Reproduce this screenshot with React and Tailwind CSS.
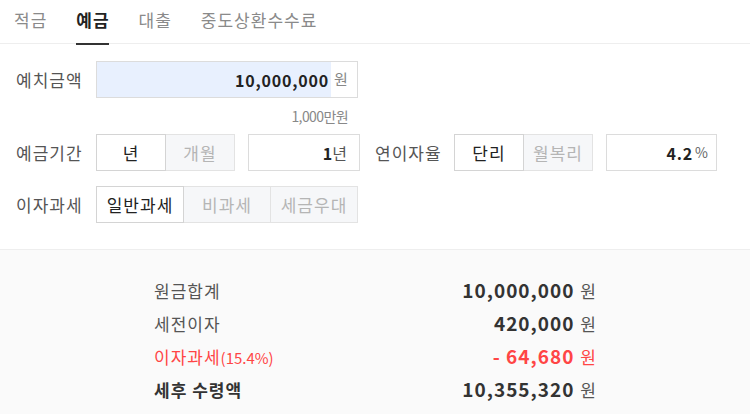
import React, { useState } from "react";

const tabs = ["적금", "예금", "대출", "중도상환수수료"];

const results = [
  { label: "원금합계", value: "10,000,000" },
  { label: "세전이자", value: "420,000" },
  { label: "이자과세", sub: "(15.4%)", value: "- 64,680", red: true },
  { label: "세후 수령액", value: "10,355,320", bold: true },
];

function classNames(...classes) {
  return classes.filter(Boolean).join(" ");
}

function Toggle({ items, active, width }) {
  return (
    <div className="flex">
      {items.map((item, i) => (
        <button
          key={item}
          type="button"
          className={classNames(
            "h-[37px] border text-[17px] tracking-[1px]",
            width,
            i > 0 && "-ml-px",
            i === active
              ? "relative z-10 border-[#d4d4d4] bg-white text-[#222]"
              : "border-[#e3e3e3] bg-[#f6f7f9] text-[#b5b5b5]"
          )}
        >
          {item}
        </button>
      ))}
    </div>
  );
}

export default function App() {
  const [tab, setTab] = useState(1);

  return (
    <div className="h-[414px] w-[750px] overflow-hidden bg-white font-['Noto_Sans_CJK_KR','Noto_Sans',sans-serif] text-[#555]">
      {/* tabs */}
      <div className="flex h-[44px] gap-[29px] border-b border-[#eeeeee] pl-[14px]">
        {tabs.map((t, i) => (
          <button
            key={t}
            type="button"
            onClick={() => setTab(i)}
            className={classNames(
              "relative h-[44px] pb-[4px] text-[17px] tracking-[1px]",
              i === tab ? "font-bold text-[#222]" : "text-[#8a8a8a]"
            )}
          >
            {t}
            {i === tab && (
              <span className="absolute bottom-[-1px] left-0 h-[2px] w-[33px] bg-[#333]" />
            )}
          </button>
        ))}
      </div>

      {/* form */}
      <div className="h-[206px] border-b border-[#eeeeee] pl-[16px] pt-[17px]">
        <div className="flex items-center">
          <div className="w-[80px] text-[17px] tracking-[1px]">예치금액</div>
          <div className="flex h-[37px] w-[262px] items-center border border-[#dcdcdc]">
            <div className="flex h-full flex-1 items-center justify-end bg-[#e8f0fe] pr-[2px] text-[16px] font-bold tracking-[0.8px] text-[#222]">
              10,000,000
            </div>
            <span className="w-[26px] pl-[3px] text-[15px] text-[#888]">원</span>
          </div>
        </div>
        <div className="flex h-[36px] w-[332px] items-center justify-end text-[14px] tracking-[-0.6px] text-[#888]">
          1,000만원
        </div>

        <div className="flex items-center">
          <div className="w-[80px] text-[17px] tracking-[1px]">예금기간</div>
          <Toggle items={["년", "개월"]} active={0} width="w-[70px]" />
          <div className="ml-[13px] flex h-[37px] w-[112px] items-center justify-end border border-[#dcdcdc] pr-[12px] text-[#222]">
            <span className="text-[16px] font-bold">1</span>
            <span className="text-[16px] text-[#555]">년</span>
          </div>
          <div className="ml-[15px] w-[79px] text-[17px] tracking-[1px]">연이자율</div>
          <Toggle items={["단리", "월복리"]} active={0} width="w-[70px]" />
          <div className="ml-[13px] flex h-[37px] w-[111px] items-center justify-end border border-[#dcdcdc] pr-[8px] text-[#222]">
            <span className="text-[16px] font-bold tracking-[0.8px]">4.2</span>
            <span className="ml-[2px] text-[14px] text-[#666]">%</span>
          </div>
        </div>

        <div className="mt-[15px] flex items-center">
          <div className="w-[80px] text-[17px] tracking-[1px]">이자과세</div>
          <Toggle items={["일반과세", "비과세", "세금우대"]} active={0} width="w-[88px]" />
        </div>
      </div>

      {/* results */}
      <div className="h-full bg-[#fafafa] pt-[24px]">
        <div className="mx-auto w-[442px]">
          {results.map((r) => (
            <div
              key={r.label}
              className={classNames(
                "flex h-[33px] items-center justify-between",
                r.red ? "text-[#ff4545]" : "text-[#555]"
              )}
            >
              <div
                className={classNames(
                  "text-[17px] tracking-[1px]",
                  r.bold && "font-bold text-[#333]"
                )}
              >
                {r.label}
                {r.sub && <span className="text-[15px] tracking-normal">{r.sub}</span>}
              </div>
              <div className="flex items-center">
                <span
                  className={classNames(
                    "text-[19px] font-bold tracking-[1px]",
                    r.red ? "text-[#ff4545]" : "text-[#333]"
                  )}
                >
                  {r.value}
                </span>
                <span className="ml-[6px] text-[17px]">원</span>
              </div>
            </div>
          ))}
        </div>
      </div>
    </div>
  );
}
